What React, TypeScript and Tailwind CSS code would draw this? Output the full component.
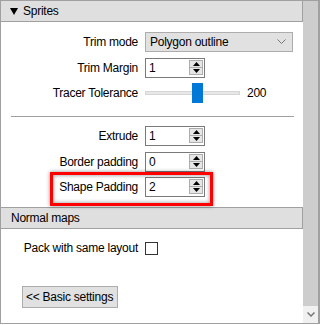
import React from "react";

const FONT = "font-['Liberation_Sans',Arial,sans-serif]";

function Label({ children }: { children: React.ReactNode }) {
  return <div className="w-[137px] shrink-0 whitespace-nowrap text-right">{children}</div>;
}

function SpinBox({ value }: { value: string }) {
  return (
    <div className="ml-[7px] flex h-[20px] w-[60px] border border-[#7a7a7a] bg-white">
      <div className="flex-1 pl-[3px] leading-[18px]">{value}</div>
      <div className="mr-[1px] mt-[1px] flex h-[15px] w-[14px] flex-col">
        <div className="flex h-[8px] items-center justify-center border border-[#adadad] bg-[#e6e6e6]">
          <svg width="7" height="4" viewBox="0 0 7 4">
            <polygon points="3.5,0 7,4 0,4" fill="#000" />
          </svg>
        </div>
        <div className="flex h-[7px] items-center justify-center border border-t-0 border-[#adadad] bg-[#e6e6e6]">
          <svg width="7" height="4" viewBox="0 0 7 4">
            <polygon points="0,0 7,0 3.5,4" fill="#000" />
          </svg>
        </div>
      </div>
    </div>
  );
}

export default function App() {
  return (
    <div className={`${FONT} relative h-[324px] w-[320px] border border-r-2 border-[#a0a0a0] bg-white text-[12px] tracking-[-0.25px] text-black`}>
      <div className="flex h-full">
        {/* panel content */}
        <div className="w-[302px] shrink-0">
          <div className="flex h-[21px] items-center border-b border-r border-[#a0a0a0] bg-[#dfdfdf]">
            <svg className="ml-[9px]" width="8" height="7" viewBox="0 0 8 7">
              <polygon points="0,0 8,0 4,7" fill="#000" />
            </svg>
            <span className="ml-[5px]">Sprites</span>
          </div>

          {/* Trim mode */}
          <div className="mt-[10px] flex items-center">
            <Label>Trim mode</Label>
            <div className="ml-[7px] flex h-[20px] w-[148px] items-center border border-[#adadad] bg-[#e1e1e1] pl-[4px]">
              <span className="flex-1">Polygon outline</span>
              <svg className="mr-[6px]" width="9" height="6" viewBox="0 0 9 6">
                <polyline points="0.5,0.5 4.5,4.5 8.5,0.5" fill="none" stroke="#777" strokeWidth="1" />
              </svg>
            </div>
          </div>

          {/* Trim Margin */}
          <div className="mt-[6px] flex items-center">
            <Label>Trim Margin</Label>
            <SpinBox value="1" />
          </div>

          {/* Tracer Tolerance */}
          <div className="mt-[5px] flex h-[20px] items-center">
            <Label>Tracer Tolerance</Label>
            <div className="relative ml-[7px] flex h-[20px] w-[95px] items-center">
              <div className="h-[4px] w-full border border-[#d6d6d6] bg-[#e7e7e7]" />
              <div className="absolute left-[47px] top-0 h-[20px] w-[11px] bg-[#0078d7]" />
            </div>
            <span className="ml-[7px]">200</span>
          </div>

          <div className="ml-[10px] mt-[13px] h-px w-[283px] bg-[#a0a0a0]" />

          <div className="mt-[9px] flex items-center">
            <Label>Extrude</Label>
            <SpinBox value="1" />
          </div>
          <div className="mt-[6px] flex items-center">
            <Label>Border padding</Label>
            <SpinBox value="0" />
          </div>
          <div className="mt-[5px] flex items-center">
            <Label>Shape Padding</Label>
            <SpinBox value="2" />
          </div>

          <div className="mt-[10px] flex h-[22px] items-center border-y border-r border-[#a0a0a0] bg-[#dfdfdf] pl-[10px]">
            Normal maps
          </div>

          <div className="mt-[10px] flex items-center">
            <Label>Pack with same layout</Label>
            <div className="ml-[7px] h-[13px] w-[13px] border border-[#333333] bg-white" />
          </div>

          <button className="ml-[21px] mt-[29px] flex h-[22px] w-[96px] items-center whitespace-nowrap border border-[#adadad] bg-[#e1e1e1] pl-[3px] text-[12px]">
            &lt;&lt; Basic settings
          </button>
        </div>

        {/* scrollbar */}
        <div className="flex flex-1 flex-col">
          <div className="flex-1 bg-[#cdcdcd]" />
          <div className="flex h-[17px] items-center justify-center bg-[#f0f0f0]">
            <svg width="8" height="5" viewBox="0 0 8 5">
              <polyline points="0.5,0.5 4,4 7.5,0.5" fill="none" stroke="#777" strokeWidth="1.5" />
            </svg>
          </div>
        </div>
      </div>

      {/* annotation highlight */}
      <div className="absolute left-[49px] top-[171px] h-[34px] w-[163px] border-[3px] border-[#ff0000] shadow-[0_0_4px_rgba(0,0,0,0.45),inset_0_0_4px_rgba(0,0,0,0.45)]" />
    </div>
  );
}
